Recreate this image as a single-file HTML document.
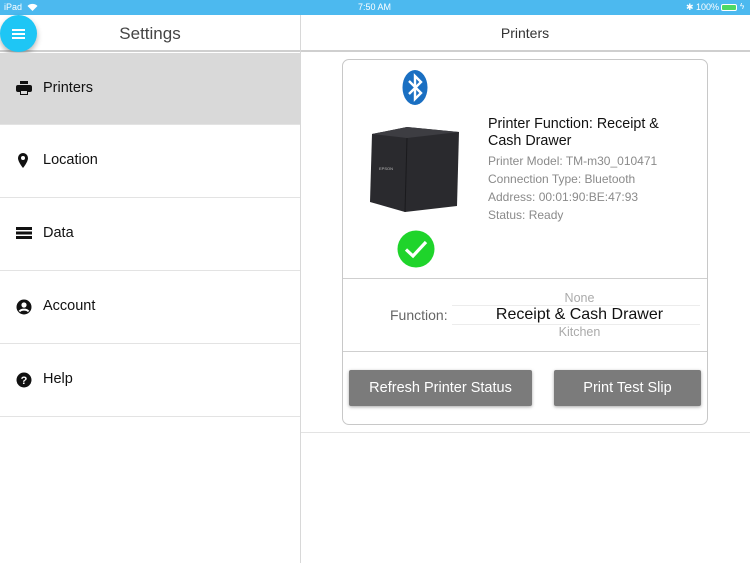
<!DOCTYPE html>
<html><head><meta charset="utf-8"><style>
*{margin:0;padding:0;box-sizing:border-box}
body{width:750px;height:563px;overflow:hidden;background:#fff;font-family:"Liberation Sans",sans-serif;position:relative}
.abs{position:absolute}
.sb{left:0;top:0;width:750px;height:15px;background:#4cb9ef;color:#fff;font-size:9px}
.row{left:0;width:300px;height:73px;border-bottom:1px solid #e3e3e3}
.row span{position:absolute;left:43px;top:27px;font-size:14.5px;color:#111}
.row svg{position:absolute;left:16px;top:28px}
.gray{color:#8a8a8a;font-size:12px;line-height:18px}
.btn{background:#7b7b7b;color:#fff;font-size:14.5px;text-align:center;line-height:37px;box-shadow:0 1px 3px rgba(0,0,0,.35);border-radius:2px}
</style></head><body>
<div class="abs sb"><span class="abs" style="left:4px;top:2px">iPad</span>
<svg class="abs" style="left:27px;top:3px" width="11" height="9" viewBox="0 0 11 9"><path d="M5.5 8L0.5 3A7 7 0 0 1 10.5 3Z" fill="#fff"/></svg>
<span class="abs" style="left:358px;top:2px">7:50 AM</span>
<span class="abs" style="left:686px;top:2px">✱ 100%</span>
<div class="abs" style="left:721px;top:4px;width:16px;height:7px;border:1px solid #fff;border-radius:2px;background:#4cd964"></div>
<span class="abs" style="left:740px;top:2px;font-size:8px">ϟ</span>
</div>
<div class="abs" style="left:0;top:15px;width:750px;height:37px;border-bottom:2px solid #cfcfcf;background:#fff"></div>
<div class="abs" style="left:0;top:24px;width:300px;text-align:center;font-size:17px;color:#444">Settings</div>
<div class="abs" style="left:300px;top:25px;width:450px;text-align:center;font-size:14px;color:#333">Printers</div>
<div class="abs" style="left:300px;top:15px;width:1px;height:548px;background:#d8d8d8"></div>
<div class="abs" style="left:0;top:15px;width:37px;height:37px;border-radius:50%;background:#1ec6f5;box-shadow:0 3px 6px rgba(0,0,0,.3)"></div>
<div class="abs" style="left:12px;top:29px;width:13px;height:2px;background:#fff;box-shadow:0 4px 0 #fff,0 8px 0 #fff"></div>

<div class="abs row" style="top:53px;background:#d9d9d9;height:72px"><svg width="16" height="14" viewBox="0 0 16 14"><rect x="4" y="0" width="8" height="3" fill="#111"/><rect x="0" y="4" width="16" height="7" rx="2" fill="#111"/><rect x="4" y="9" width="8" height="5" fill="#111"/><rect x="5" y="10" width="6" height="3" fill="#d9d9d9"/></svg><span>Printers</span></div>
<div class="abs row" style="top:125px"><svg width="14" height="16" viewBox="0 0 14 16"><path d="M7 0A5 5 0 0 0 2 5C2 9 7 15 7 15S12 9 12 5A5 5 0 0 0 7 0Z" fill="#111"/><circle cx="7" cy="5" r="2" fill="#fff"/></svg><span>Location</span></div>
<div class="abs row" style="top:198px"><svg width="16" height="14" viewBox="0 0 16 14"><rect y="1" width="16" height="3" fill="#111"/><rect y="5.5" width="16" height="3" fill="#111"/><rect y="10" width="16" height="3" fill="#111"/></svg><span>Data</span></div>
<div class="abs row" style="top:271px"><svg width="16" height="16" viewBox="0 0 16 16"><circle cx="8" cy="8" r="7.5" fill="#111"/><circle cx="8" cy="6" r="2.6" fill="#fff"/><path d="M3.5 12.5C5 10 11 10 12.5 12.5" stroke="#fff" stroke-width="2" fill="none"/></svg><span>Account</span></div>
<div class="abs row" style="top:344px"><svg width="16" height="16" viewBox="0 0 16 16"><circle cx="8" cy="8" r="7.5" fill="#111"/><text x="8" y="12" font-size="11" font-weight="bold" fill="#fff" text-anchor="middle" font-family="Liberation Sans">?</text></svg><span>Help</span></div>

<div class="abs" style="left:301px;top:432px;width:449px;height:1px;background:#e3e3e3"></div>
<div class="abs" style="left:342px;top:59px;width:366px;height:366px;border:1px solid #c8c8c8;border-radius:7px"></div>
<div class="abs" style="left:343px;top:278px;width:364px;height:1px;background:#cfcfcf"></div>
<div class="abs" style="left:343px;top:351px;width:364px;height:1px;background:#cfcfcf"></div>
<svg class="abs" style="left:402px;top:70px" width="26" height="35" viewBox="0 0 26 35"><ellipse cx="13" cy="17.5" rx="12.5" ry="17.5" fill="#1a6fc2"/><path d="M7 11L19 23L13 29V6L19 12L7 24" stroke="#fff" stroke-width="2.4" fill="none"/></svg>
<svg class="abs" style="left:367px;top:124px" width="96" height="90" viewBox="0 0 96 90"><path d="M5 10L40 3L92 8L90 82L38 88L3 78Z" fill="#2a2a2e"/><path d="M5 10L40 3L92 8L40 14Z" fill="#3d3d42"/><path d="M40 14L38 88" stroke="#1a1a1d" stroke-width="1"/><text x="12" y="46" font-size="4" fill="#bbb" font-family="Liberation Sans">EPSON</text></svg>
<svg class="abs" style="left:397px;top:230px" width="38" height="38" viewBox="0 0 38 38"><circle cx="19" cy="19" r="18.5" fill="#1fd42b"/><path d="M9 19.5L16 26L29 12" stroke="#fff" stroke-width="3.2" fill="none"/></svg>
<div class="abs" style="left:488px;top:116px;font-size:14.3px;line-height:17px;color:#111">Printer Function: Receipt &amp;<br>Cash Drawer</div>
<div class="abs gray" style="left:488px;top:152px">Printer Model: TM-m30_010471<br>Connection Type: Bluetooth<br>Address: 00:01:90:BE:47:93<br>Status: Ready</div>
<div class="abs" style="left:452px;top:305px;width:248px;height:1px;background:#ececec"></div>
<div class="abs" style="left:452px;top:324px;width:248px;height:1px;background:#ececec"></div>
<div class="abs" style="left:452px;top:291px;width:255px;text-align:center;font-size:12.5px;color:#aaa">None</div>
<div class="abs" style="left:452px;top:306px;width:255px;text-align:center;font-size:16px;color:#111">Receipt &amp; Cash Drawer</div>
<div class="abs" style="left:452px;top:325px;width:255px;text-align:center;font-size:12.5px;color:#aaa">Kitchen</div>
<div class="abs" style="left:390px;top:307px;font-size:14px;color:#666">Function:</div>
<div class="abs btn" style="left:349px;top:370px;width:183px;height:36px">Refresh Printer Status</div>
<div class="abs btn" style="left:554px;top:370px;width:147px;height:36px">Print Test Slip</div>
</body></html>
